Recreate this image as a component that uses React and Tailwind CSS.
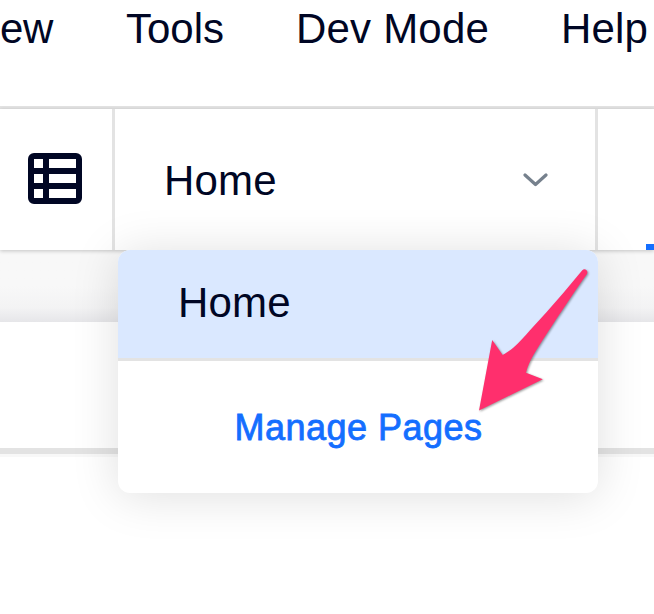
const sans = "font-['Liberation_Sans',Arial,sans-serif]";

function MenuBar() {
  return (
    <nav className="h-[109px] shrink-0 border-b-[3px] border-[#e3e3e3] bg-white">
      <div className="flex h-[58px] items-center whitespace-nowrap text-[42px] leading-none">
        <span className="w-[126px] shrink-0 tracking-[-0.4px]">ew</span>
        <span className="w-[170px] shrink-0">Tools</span>
        <span className="w-[265px] shrink-0 tracking-[0.2px]">Dev Mode</span>
        <span className="shrink-0 tracking-[0.2px]">Help</span>
      </div>
    </nav>
  );
}

function TableIcon() {
  return (
    <svg className="-mt-[3px] h-[51px] w-[54px]" viewBox="0 0 54 51" fill="none" stroke="#000624" strokeWidth="6">
      <rect x="3" y="3" width="48" height="45" rx="3" />
      <path d="M18 3V48M3 18H51M3 33H51" />
    </svg>
  );
}

function PageMenu() {
  return (
    <div className="absolute left-[3px] top-[141px] z-10 h-[243px] w-[480px] rounded-xl bg-white shadow-[0_3px_48px_rgba(0,0,0,0.13)]">
      <div className="flex h-[111px] items-center rounded-t-xl border-b-[3px] border-[#e3e3e3] bg-[#dae8ff] pl-[60px] text-[42px] leading-none tracking-[0.2px]">
        <span className="-mt-[2px]">Home</span>
      </div>
      <div className="flex h-[132px] items-center justify-center text-[36px] leading-none tracking-[0.5px] text-[#146eff] [-webkit-text-stroke:0.8px_#146eff]">
        <span className="ml-[1px] mt-[2px]">Manage Pages</span>
      </div>
      <svg
        className="absolute left-[350px] top-[10px] h-[164px] w-[130px] drop-shadow-[1px_1px_1px_rgba(0,0,0,0.4)]"
        viewBox="468 260 130 164"
      >
        <path
          fill="#ff2f6d"
          d="M582.3 270.2C585 267.8 588.8 271 586.8 274.2C577 288 565 306 553.3 323.7C546 335 539 345 533.3 355.3C530 361 527.5 367 526 372.7L542.8 379.2L479 410.5L492.2 340L502.7 355C506 353 510 350.5 513.3 347.7C519 343 525 336 530 330.3L546.7 312L563.3 293Z"
        />
      </svg>
    </div>
  );
}

function Toolbar() {
  return (
    <div className="relative z-10 flex h-[141px] shrink-0 bg-white shadow-[0_1px_4px_rgba(0,0,0,0.22)]">
      <div className="flex w-[115px] shrink-0 items-center border-r-[3px] border-[#e3e3e3] pl-7">
        <TableIcon />
      </div>
      <div className="relative flex w-[483px] shrink-0 items-center justify-between border-r-[3px] border-[#e3e3e3] pl-[49px] pr-[47.5px] text-[42px] leading-none tracking-[0.2px]">
        <span className="mt-[3px]">Home</span>
        <svg className="mt-[1px] h-[14px] w-[25px]" viewBox="0 0 25 14" fill="none">
          <path d="M2 2L12.5 11.5L23 2" stroke="#76818d" strokeWidth="3.2" strokeLinecap="round" strokeLinejoin="round" />
        </svg>
        <PageMenu />
      </div>
      <div className="flex flex-1 items-end justify-end">
        <div className="h-[6px] w-2 bg-[#146eff]" />
      </div>
    </div>
  );
}

export default function App() {
  return (
    <div className={`flex h-[614px] w-[654px] flex-col overflow-hidden bg-white text-[#000624] ${sans}`}>
      <MenuBar />
      <Toolbar />
      <div className="h-[72px] shrink-0 bg-linear-to-b from-[#f8f8f8] from-50% via-[#f3f3f4] via-80% to-[#e6e6e9]" />
      <div className="h-[132px] shrink-0 border-b-[6px] border-[#e3e3e3] bg-white" />
      <div className="h-[3px] shrink-0 bg-[#f8f8f8]" />
      <div className="flex-1 bg-white" />
    </div>
  );
}
